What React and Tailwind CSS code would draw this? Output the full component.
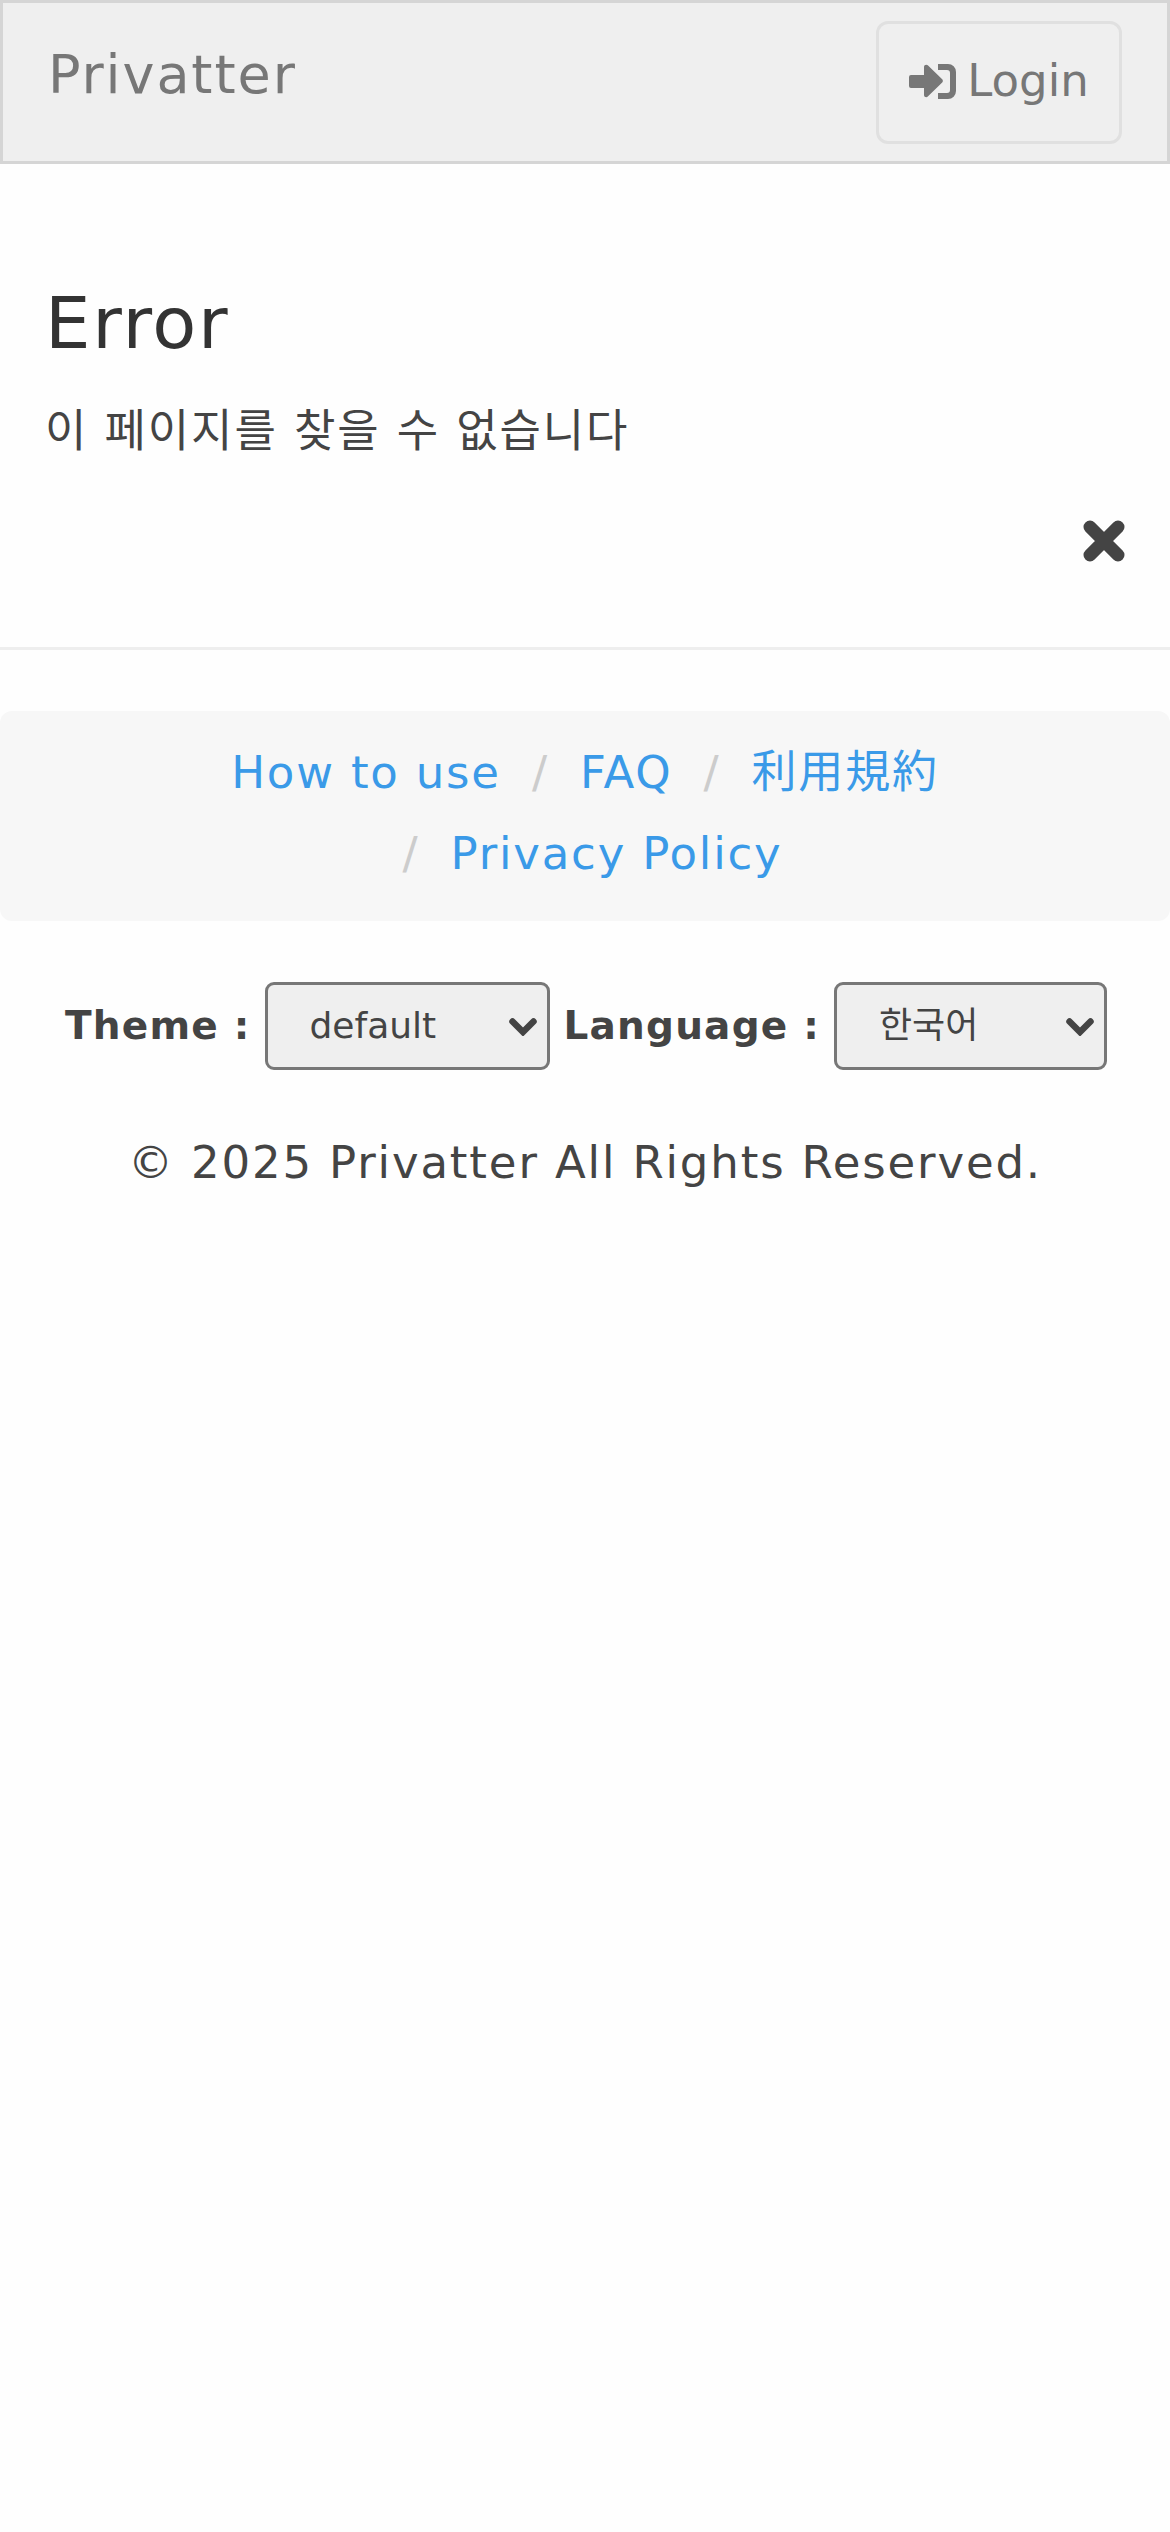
import React from 'react'

const FONT = 'font-["DejaVu_Sans","Noto_Sans_CJK_KR",sans-serif]'

const LoginIcon = () => (
  <svg viewBox="0 0 47 35" className="w-[47px] h-[35px]" fill="#777">
    <path d="M0 13a2 2 0 0 1 2-2h13V3c0-2 2.300-3 3.800-1.700l14.400 14c.9.9.9 2.400 0 3.300l-14.400 14c-1.500 1.300-3.800.3-3.800-1.700v-7H2a2 2 0 0 1-2-2z" />
    <path d="M29 0h10a8 8 0 0 1 8 8v19a8 8 0 0 1-8 8H29v-6h9a3 3 0 0 0 3-3V9a3 3 0 0 0-3-3h-9z" />
  </svg>
)

const CloseIcon = () => (
  <svg viewBox="0 0 42 42" className="w-[42px] h-[42px]" fill="none" stroke="#444" strokeWidth="13" strokeLinecap="round">
    <path d="M7 7l28 28M35 7L7 35" />
  </svg>
)

const Chevron = () => (
  <svg viewBox="0 0 28 18" className="absolute right-[13px] top-[36px] w-[28px] h-[18px] pointer-events-none" fill="none" stroke="#444" strokeWidth="6.500" strokeLinecap="round" strokeLinejoin="miter">
    <path d="M3.500 3.500 14 14 24.500 3.500" />
  </svg>
)

const Crumb = ({ children, first }) => (
  <span className="inline-block">
    {!first && <span className="text-[#ccc] pl-[15px] pr-[31px]">/</span>}
    <a>{children}</a>
  </span>
)

const Picker = ({ value, label, width }) => (
  <div className={`relative ${width}`}>
    <select defaultValue={value} className="appearance-none w-full h-[88px] pl-[42px] rounded-[9px] border-[3px] border-[#777] bg-[#efefef] text-[36px] tracking-normal">
      <option value={value}>{label}</option>
    </select>
    <Chevron />
  </div>
)

const App = () => {
  return (
    <div className={`min-h-[2532px] bg-[#fefefe] text-[#444] ${FONT}`}>
      {/* Navbar */}
      <div className="h-[164px] bg-[#efefef] border-[3px] border-[#d5d5d5] flex justify-between items-start">
        <a className="mt-[42px] ml-[45px] text-[54px] leading-[60px] tracking-[1.9px] text-[#777]">Privatter</a>
        <button className="mt-[18px] mr-[45px] w-[246px] h-[123px] rounded-[12px] border-[3px] border-[#e0e0e0] flex items-center justify-center gap-[11px] text-[45px] leading-[56px] text-[#777]">
          <span className="-mt-[3px]"><LoginIcon /></span>
          <span className="-mt-[3px]">Login</span>
        </button>
      </div>

      {/* Error message */}
      <div className="px-[45px]">
        <h1 className="mt-[119px] text-[72px] leading-[80px] tracking-[1.8px] text-[#333]">Error</h1>
        <p className="mt-[37px] text-[45px] leading-[64px] tracking-[1.9px] text-[#444]">이 페이지를 찾을 수 없습니다</p>
        <div className="mt-[56px] flex justify-end">
          <CloseIcon />
        </div>
      </div>
      <div className="mt-[85px] border-t-[3px] border-[#eee]" />

      {/* Footer links */}
      <div className="mt-[61px] bg-[#f7f7f7] rounded-[12px] pt-[21px] pb-[27px] px-[45px] text-center text-[45px] leading-[81px] tracking-[1.8px] text-[#3a9ae8]">
        <Crumb first>How to use</Crumb>{' '}
        <Crumb>FAQ</Crumb>{' '}
        <Crumb>利用規約</Crumb>{' '}
        <Crumb>Privacy Policy</Crumb>
      </div>

      {/* Theme and language */}
      <div className="mt-[61px] pl-[2px] flex items-center justify-center gap-[14px] text-[39px] tracking-[1.2px]">
        <label className="font-bold">Theme :</label>
        <Picker value="default" label="default" width="w-[285px]" />
        <label className="font-bold">Language :</label>
        <Picker value="ko" label="한국어" width="w-[273px]" />
      </div>

      <p className="mt-[61px] text-center text-[45px] leading-[64px] tracking-[1.85px]">© 2025 Privatter All Rights Reserved.</p>
    </div>
  )
}

export default App
